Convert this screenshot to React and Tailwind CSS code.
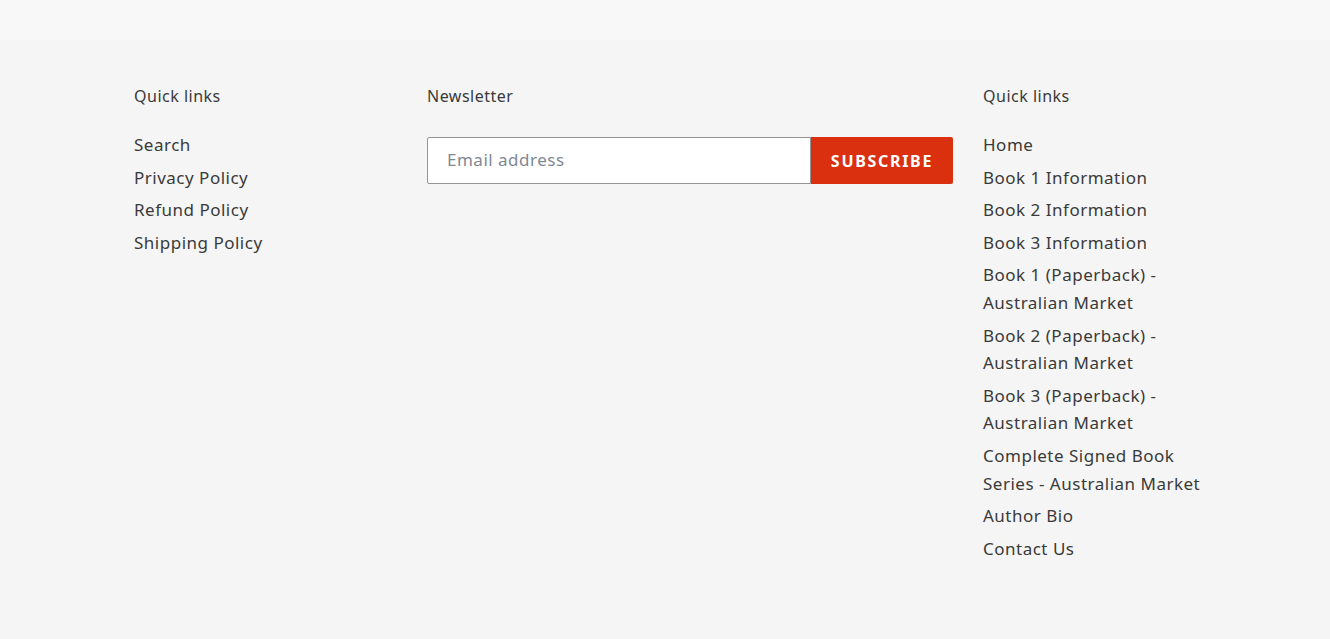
const leftLinks = ['Search', 'Privacy Policy', 'Refund Policy', 'Shipping Policy'];

const rightLinks = [
    'Home',
    'Book 1 Information',
    'Book 2 Information',
    'Book 3 Information',
    'Book 1 (Paperback) - Australian Market',
    'Book 2 (Paperback) - Australian Market',
    'Book 3 (Paperback) - Australian Market',
    'Complete Signed Book Series - Australian Market',
    'Author Bio',
    'Contact Us',
];

function LinkList({ items }) {
    return (
        <ul>
            {items.map((item) => (
                <li key={item} className="pb-[5px] pr-[30px]">
                    <a href="#" className="text-[17px] leading-[27.6px] tracking-[0.5px] text-[#3a3a3a]">
                        {item}
                    </a>
                </li>
            ))}
        </ul>
    );
}

export default function App() {
    return (
        <div className="min-h-screen bg-[#f5f5f5] font-['Noto_Sans',sans-serif] text-[#3a3a3a]">
            <div className="h-[40px] bg-[#f8f8f8]" />
            <footer className="flex pl-[134px] pt-[44px]">
                <div className="w-[293px]">
                    <h4 className="text-[16px] leading-[24px] tracking-[0.5px] mb-[23px]">Quick links</h4>
                    <LinkList items={leftLinks} />
                </div>
                <div className="w-[556px]">
                    <h4 className="text-[16px] leading-[24px] tracking-[0.5px] mb-[29px]">Newsletter</h4>
                    <form className="flex w-[526px]" onSubmit={(e) => e.preventDefault()}>
                        <input
                            type="email"
                            placeholder="Email address"
                            className="h-[47px] flex-1 rounded-l-[2px] border border-[#949494] bg-white px-[19px] pb-[2px] text-[17px] tracking-[0.5px] text-[#3a3a3a] outline-none placeholder:text-[#808894]"
                        />
                        <button className="h-[47px] w-[142px] rounded-r-[2px] bg-[#da3010] text-[16px] font-bold uppercase tracking-[1.7px] text-white">
                            Subscribe
                        </button>
                    </form>
                </div>
                <div className="w-[263px]">
                    <h4 className="text-[16px] leading-[24px] tracking-[0.5px] mb-[23px]">Quick links</h4>
                    <LinkList items={rightLinks} />
                </div>
            </footer>
        </div>
    );
}
